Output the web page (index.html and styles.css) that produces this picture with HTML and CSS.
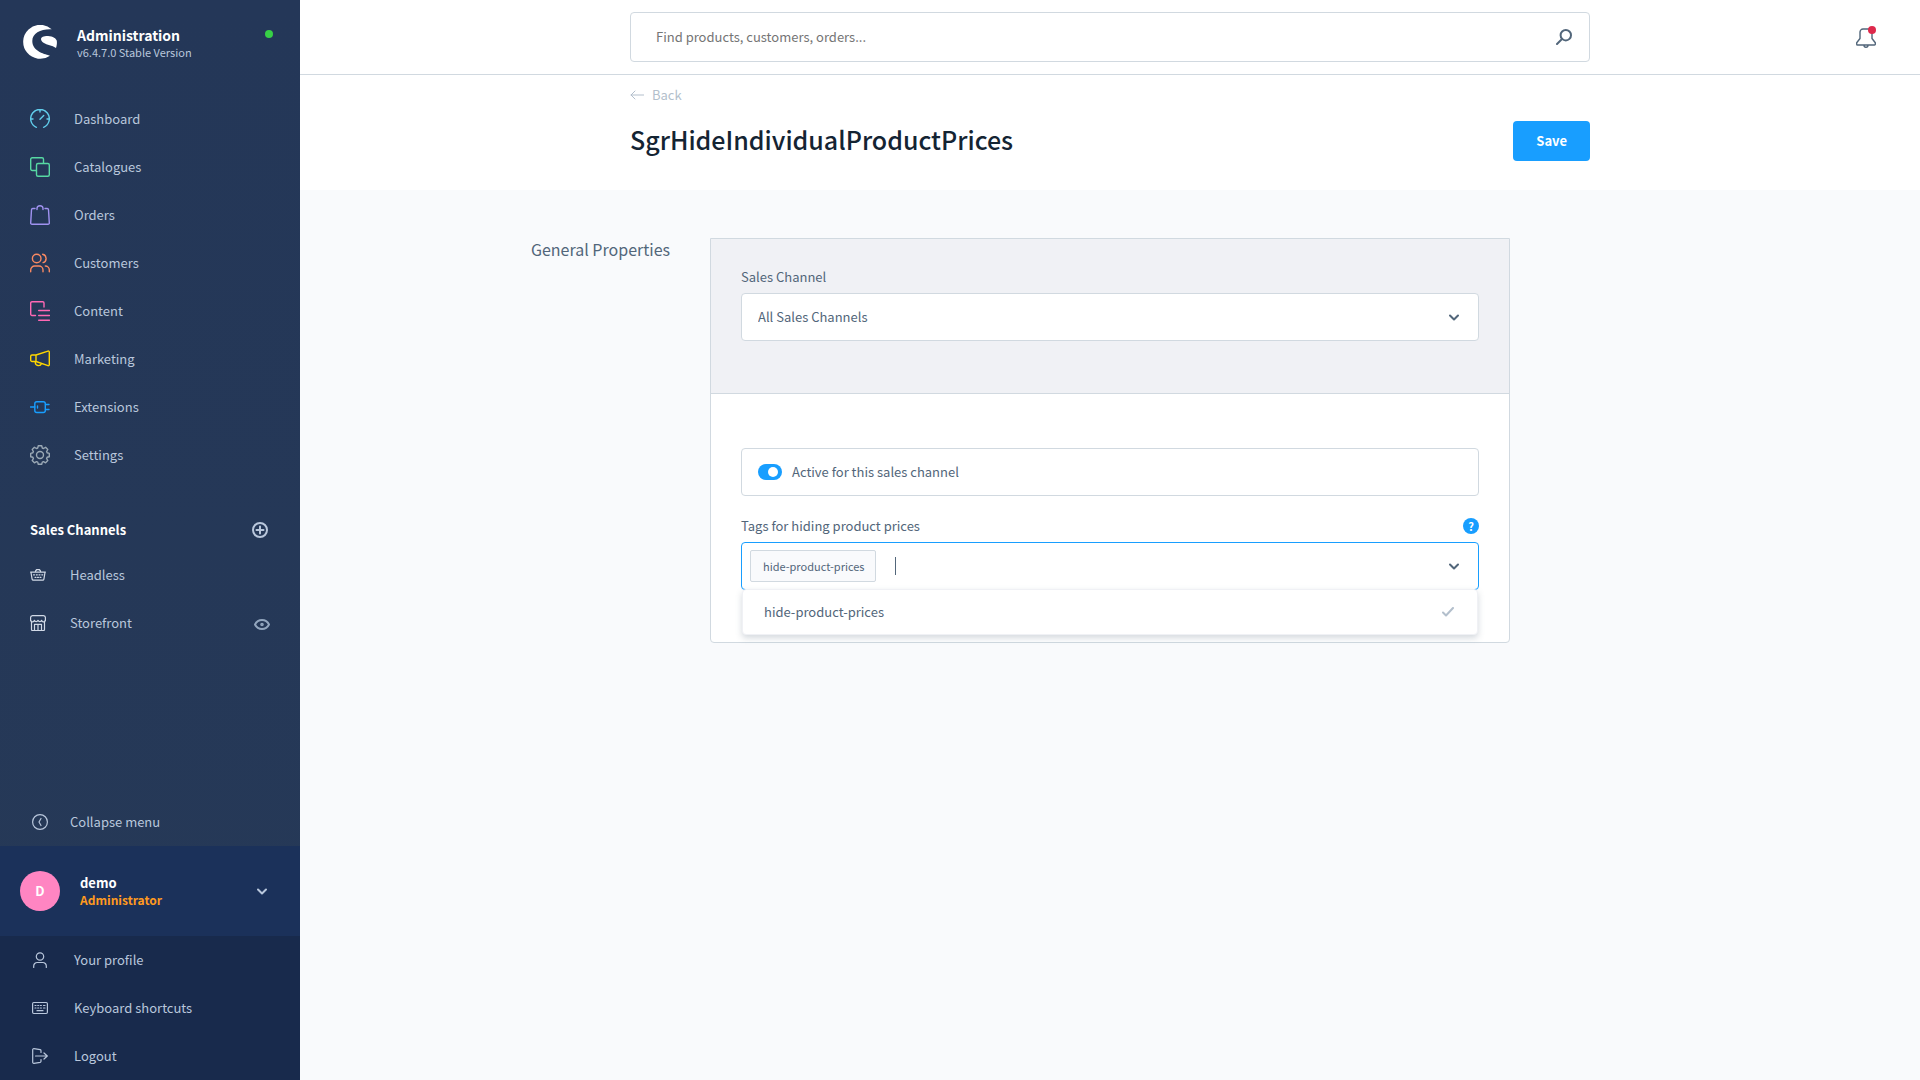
FILE: index.html
```html
<!DOCTYPE html>
<html lang="en">
<head>
<meta charset="utf-8">
<meta name="viewport" content="width=device-width, initial-scale=1">
<title>SgrHideIndividualProductPrices | Administration</title>
<link rel="stylesheet" href="styles.css">
</head>
<body>
<div class="app">
  <aside class="sidebar">
    <header class="brand">
      <svg class="brand-logo" viewBox="0 0 34 34" aria-hidden="true"><path d="M28.7 4.3A17 17 0 1 0 27 30.7C23 29.3 9.3 27 9.3 16 9.3 8 18 3.8 28.7 4.3z"/><path d="M18 14C18 12 21 10.8 25 10.9 30 11 33.3 13.5 33.8 15.8 34.1 18 33.8 21 33 22.9 29 20.5 24 20 20.5 17.8 19 16.8 18 15.5 18 14z"/></svg>
      <div class="brand-text">
        <strong class="brand-name">Administration</strong>
        <span class="brand-version">v6.4.7.0 Stable Version</span>
      </div>
      <span class="status-dot"></span>
    </header>

    <nav class="nav">
      <a class="nav-item" href="#dashboard"><svg class="icon cyan" viewBox="0 0 20 20"><path d="M6.400 18.300A9.300 9.300 0 1 1 13.600 18.300M10 1v2M1 10h2M17 10h2M10 10.300l3.700-3.800"/></svg>Dashboard</a>
      <a class="nav-item" href="#catalogues"><svg class="icon green" viewBox="0 0 20 20"><path d="M6 13.500H2.200a1.500 1.500 0 0 1-1.500-1.500V2.200A1.500 1.500 0 0 1 2.200.7H12a1.500 1.500 0 0 1 1.500 1.500V6"/><rect x="6.500" y="6.500" width="12.800" height="12.800" rx="1.500"/></svg>Catalogues</a>
      <a class="nav-item" href="#orders"><svg class="icon purple" viewBox="0 0 20 20"><path d="M5 3.500H2.800a1.300 1.300 0 0 0-1.300 1.200L.7 17.900a1.300 1.300 0 0 0 1.300 1.400h16a1.300 1.300 0 0 0 1.300-1.400L18.500 4.700a1.300 1.300 0 0 0-1.300-1.200H15M7 4.500V3.500a3 2.800 0 0 1 6 0v1"/></svg>Orders</a>
      <a class="nav-item" href="#customers"><svg class="icon orange" viewBox="0 0 20 20"><circle cx="6.700" cy="5.500" r="4.300"/><path d="M.7 18.800V17a4 4 0 0 1 4-4H9a4 4 0 0 1 4 4v1.800M12.700 1.300a4.300 4.300 0 0 1 .4 8.300M15.300 13a4 4 0 0 1 4 4v1.800"/></svg>Customers</a>
      <a class="nav-item" href="#content"><svg class="icon pink" viewBox="0 0 20 20"><path d="M5.500 14.500H2A1.300 1.300 0 0 1 .7 13.200V2A1.300 1.300 0 0 1 2 .7h10.700A1.300 1.300 0 0 1 14 2v4M8.700 9.500h10.800M8.700 14.500h10.800M8.700 19.300h10.800"/></svg>Content</a>
      <a class="nav-item" href="#marketing"><svg class="icon yellow" viewBox="0 0 20 20"><path d="M.7 7.300A1.300 1.300 0 0 1 2 6h4l12-3.900a1 1 0 0 1 1.300 1v12.600a1 1 0 0 1-1.300 1L6 12.500H2a1.300 1.300 0 0 1-1.300-1.300zM6 6v6.500M5.300 12.500v1a3.200 3.200 0 0 0 6.200 1"/></svg>Marketing</a>
      <a class="nav-item" href="#extensions"><svg class="icon blue" viewBox="0 0 20 20"><rect x="4.800" y="4.700" width="10.500" height="10.800" rx="2"/><path d="M.5 10H4.800M15.500 7.500H19M15.500 12.500H19M7.500 9v2"/></svg>Extensions</a>
      <a class="nav-item" href="#settings"><svg class="icon grey" viewBox="0 0 20 20"><path d="M8.300.7h3.400l.6 2.300 1.200.5 2.100-1.200 2.200 2.200-1.200 2.100.5 1.200 2.200.6v3.300l-2.200.6-.5 1.200 1.200 2.100-2.200 2.200-2.100-1.200-1.200.5-.6 2.200H8.300l-.6-2.200-1.200-.5-2.100 1.200-2.200-2.200 1.200-2.100-.5-1.200-2.200-.6V8.400l2.200-.6.5-1.200-1.200-2.100 2.200-2.200 2.100 1.200L7.700 3z"/><circle cx="10" cy="10" r="3.500"/></svg>Settings</a>
    </nav>

    <section class="channels">
      <div class="channels-head">
        <h2 class="channels-title">Sales Channels</h2>
        <button class="icon-button" type="button" aria-label="Add sales channel"><svg class="icon-small bold-line" viewBox="0 0 16 16"><circle cx="8" cy="8" r="7"/><path d="M8 4.500v7M4.500 8h7"/></svg></button>
      </div>
      <div class="channel">
        <a class="channel-link" href="#headless"><svg class="icon-small light" viewBox="0 0 16 16"><path d="M.6 5.100h14.800M1 5.500l1.100 6.700a1.200 1.200 0 0 0 1.200 1h9.400a1.200 1.200 0 0 0 1.200-1L15 5.500M5.500 5V4a1 1 0 0 1 1-.8M10.500 5V4a1 1 0 0 0-1-.8M6.500 2.700h3"/><path d="M3.500 7.800h1M6.300 7.800h1M9 7.800h1M11.800 7.800h1M5 10.300h1M7.500 10.300h1M10 10.300h1"/></svg>Headless</a>
      </div>
      <div class="channel">
        <a class="channel-link" href="#storefront"><svg class="icon-small light" viewBox="0 0 16 16"><path d="M1.500 6v8.500a1 1 0 0 0 1 1h11a1 1 0 0 0 1-1V6M2.500.6h11a2 2 0 0 1 1.900 2V4.500a1.600 1.600 0 0 1-3.700.8 2 2 0 0 1-3.700 0 2 2 0 0 1-3.700 0A1.600 1.600 0 0 1 .6 4.500V2.600a2 2 0 0 1 1.900-2zM4.500 15.500V9.300h7v6.200M8 9.300v6.200"/></svg>Storefront</a>
        <button class="icon-button" type="button" aria-label="Open storefront"><svg class="icon-small muted" viewBox="0 0 16 16"><path d="M1 9.500C4 3.600 12 3.600 15 9.500 12 15.400 4 15.400 1 9.500z"/><circle cx="8" cy="9.500" r=".8"/></svg></button>
      </div>
    </section>

    <footer class="sidebar-foot">
      <button class="foot-item collapse" type="button"><svg class="icon-small" viewBox="0 0 16 16"><circle cx="8" cy="8" r="7.400"/><path d="M9 4.500L7 8l2 3.500"/></svg>Collapse menu</button>
      <button class="user" type="button">
        <span class="avatar">D</span>
        <span class="user-text"><strong class="user-name">demo</strong><strong class="user-role">Administrator</strong></span>
        <svg class="chevron" viewBox="0 0 10 8"><path d="M1 2.500l4 4 4-4"/></svg>
      </button>
      <div class="user-menu">
        <a class="foot-item" href="#profile"><svg class="icon-small" viewBox="0 0 16 16"><circle cx="8" cy="4.500" r="3.700"/><path d="M1.700 15.500V14a3.500 3.500 0 0 1 3.500-3.500h5.600a3.500 3.500 0 0 1 3.500 3.500v1.500"/></svg>Your profile</a>
        <a class="foot-item" href="#shortcuts"><svg class="icon-small" viewBox="0 0 16 16"><rect x=".6" y="2.500" width="14.800" height="11" rx="1.200"/><path d="M3 5.500h1M5.700 5.500h1M8.400 5.500h1M11.500 5.500h1.500M3 8h1M5.700 8h1M8.400 8h1M11.500 8h1.500M5 10.700h6"/></svg>Keyboard shortcuts</a>
        <a class="foot-item" href="#logout"><svg class="icon-small" viewBox="0 0 16 16"><path d="M9 4.500V2.700a1 1 0 0 0-.8-1L2 .7A1 1 0 0 0 .7 1.700v12.600A1 1 0 0 0 2 15.300l6.200-1a1 1 0 0 0 .8-1v-1.800M3.500 8h11.700M12 5l3.300 3L12 11"/></svg>Logout</a>
      </div>
    </footer>
  </aside>

  <main class="main">
    <div class="topbar">
      <form class="search">
        <input class="search-input" type="search" aria-label="Search" placeholder="Find products, customers, orders...">
        <button class="icon-button" type="submit" aria-label="Search"><svg class="icon-small slate" viewBox="0 0 16 16"><circle cx="9.800" cy="6.200" r="5.200"/><path d="M6 10L1 15"/></svg></button>
      </form>
      <button class="bell" type="button" aria-label="Notifications">
        <svg class="icon bell-icon" viewBox="0 0 20 20"><path d="M7 1h6a3 3 0 0 1 3 3v6.500l3.300 4.300v1.400a.8.8 0 0 1-.8.8h-17a.8.8 0 0 1-.8-.8v-1.400L4 10.500V4a3 3 0 0 1 3-3zM8 17.200a2 2 0 0 0 4 0"/></svg>
        <span class="bell-dot"></span>
      </button>
    </div>

    <header class="page-head">
      <div class="page-head-inner">
        <a class="back" href="#extensions"><svg class="back-arrow" viewBox="0 0 14 10"><path d="M14 5H1M5 1L1 5l4 4"/></svg>Back</a>
        <div class="page-title-row">
          <h1 class="page-title">SgrHideIndividualProductPrices</h1>
          <button class="save" type="button">Save</button>
        </div>
      </div>
    </header>

    <div class="content">
      <h2 class="section-title">General Properties</h2>
      <form class="card">
        <div class="card-channel">
          <label class="label" for="channel">Sales Channel</label>
          <div class="select-wrap">
            <select class="select" id="channel"><option>All Sales Channels</option></select>
            <svg class="chevron slate" viewBox="0 0 10 8"><path d="M1 2.500l4 4 4-4"/></svg>
          </div>
        </div>
        <div class="card-settings">
          <label class="switch-field"><input class="switch" type="checkbox" checked>Active for this sales channel</label>
          <div class="label-row">
            <label class="label" for="tags">Tags for hiding product prices</label>
            <button class="help" type="button" aria-label="Help">?</button>
          </div>
          <div class="tags">
            <span class="tag">hide-product-prices</span>
            <span class="caret"></span>
            <input class="tags-input" id="tags" type="text">
            <svg class="chevron slate" viewBox="0 0 10 8"><path d="M1 2.500l4 4 4-4"/></svg>
            <ul class="results">
              <li class="result">hide-product-prices<svg class="check" viewBox="0 0 12 10"><path d="M1 5.500l3 3L11 1"/></svg></li>
            </ul>
          </div>
        </div>
      </form>
    </div>
  </main>
</div>
</body>
</html>
```
FILE: styles.css
```css
* {
  box-sizing: border-box;
}

body {
  margin: 0;
  background: #f9fafc;
  color: #52667a;
  font: 13px/20px "Noto Sans CJK SC", "Noto Sans CJK JP", sans-serif;
}

h1, h2, ul {
  margin: 0;
  padding: 0;
}

button, input, select {
  margin: 0;
  padding: 0;
  border: 0;
  background: none;
  color: inherit;
  font: inherit;
}

a {
  color: inherit;
  text-decoration: none;
}

svg {
  flex: none;
  fill: none;
  stroke: currentColor;
  stroke-linecap: round;
  stroke-linejoin: round;
}

.app {
  display: flex;
  min-height: 100vh;
}

/* Sidebar */

.sidebar {
  display: flex;
  flex: none;
  flex-direction: column;
  width: 300px;
  background: linear-gradient(#243758, #263957);
  color: #b9c7dc;
}

.brand {
  display: flex;
  gap: 20px;
  padding: 25px 27px 0 23px;
}

.brand-logo {
  width: 34px;
  height: 34px;
  fill: #fff;
  stroke: none;
}

.brand-text {
  flex: 1;
}

.brand-name, .brand-version {
  display: block;
}

.brand-name {
  color: #fff;
  font-size: 14px;
}

.brand-version {
  font-size: 11px;
  line-height: 14px;
}

.status-dot {
  width: 8px;
  height: 8px;
  margin-top: 5px;
  border-radius: 50%;
  background: #37d046;
}

.nav {
  padding-top: 36px;
}

.nav-item {
  display: flex;
  align-items: center;
  gap: 24px;
  height: 48px;
  padding: 0 30px;
}

.icon {
  width: 20px;
  height: 20px;
  stroke-width: 1.4;
}

.icon-small {
  width: 16px;
  height: 16px;
  stroke-width: 1.2;
}

.cyan { color: #61cdeb; }
.green { color: #57d9a3; }
.purple { color: #a092f0; }
.orange { color: #f88962; }
.pink { color: #ff68b4; }
.yellow { color: #ffd700; }
.blue { color: #189eff; }
.grey { color: #9aa8b5; }
.light { color: #d1d9e6; }
.muted { color: #93a6be; stroke-width: 2; }
.slate { color: #52667a; stroke-width: 2; }
.bold-line { stroke-width: 2; }

.icon-button {
  display: flex;
}

.channels {
  padding-top: 30px;
}

.channels-head {
  display: flex;
  align-items: center;
  justify-content: space-between;
  height: 42px;
  padding: 0 32px 0 30px;
}

.channels-title {
  color: #fff;
  font-size: 13px;
}

.channel {
  display: flex;
  align-items: center;
  justify-content: space-between;
  height: 48px;
  padding: 0 30px;
}

.channel-link {
  display: flex;
  align-items: center;
  gap: 24px;
}

.sidebar-foot {
  margin-top: auto;
}

.foot-item {
  display: flex;
  align-items: center;
  gap: 26px;
  width: 100%;
  height: 48px;
  padding: 0 32px;
}

.collapse {
  gap: 22px;
}

.user {
  display: flex;
  align-items: center;
  gap: 20px;
  width: 100%;
  height: 90px;
  padding: 0 33px 0 20px;
  background: #1b315a;
  text-align: left;
}

.avatar {
  width: 40px;
  border-radius: 50%;
  background: #ff85c2;
  color: #fff;
  font-weight: 700;
  line-height: 40px;
  text-align: center;
}

.user-text {
  flex: 1;
}

.user-name, .user-role {
  display: block;
  line-height: 17px;
}

.user-name {
  color: #fff;
}

.user-role {
  color: #ff9a1f;
  font-size: 12px;
}

.chevron {
  width: 10px;
  height: 8px;
  stroke-width: 2;
}

.user-menu {
  background: #182a4c;
}

/* Top bar */

.main {
  flex: 1;
  min-width: 0;
}

.topbar {
  display: grid;
  grid-template-columns: 1fr minmax(0, 960px) 1fr;
  align-items: center;
  height: 75px;
  border-bottom: 1px solid #d1d9e0;
  background: #fff;
}

.search {
  display: flex;
  grid-column: 2;
  align-items: center;
  height: 50px;
  padding: 0 17px 0 25px;
  border: 1px solid #d1d9e0;
  border-radius: 4px;
}

.search-input {
  flex: 1;
  min-width: 0;
  outline: 0;
}

.search-input::placeholder {
  color: #757575;
}

.bell {
  position: relative;
  display: flex;
  justify-self: end;
  margin-top: 2px;
  margin-right: 44px;
}

.bell-icon {
  color: #52667a;
}

.bell-dot {
  position: absolute;
  top: -2px;
  right: 0;
  width: 8px;
  height: 8px;
  border-radius: 50%;
  background: #de294c;
}

/* Page header */

.page-head {
  padding: 10px 0 29px;
  background: #fff;
}

.page-head-inner {
  max-width: 960px;
  margin: 0 auto;
}

.back {
  display: inline-flex;
  align-items: center;
  gap: 8px;
  color: #b3bfcc;
}

.back-arrow {
  width: 14px;
  height: 10px;
}

.page-title-row {
  display: flex;
  align-items: flex-start;
  justify-content: space-between;
  margin-top: 16px;
}

.page-title {
  color: #142433;
  font-size: 25px;
  font-weight: 500;
  line-height: 36px;
}

.save {
  height: 40px;
  padding: 0 23px;
  border-radius: 4px;
  background: #189eff;
  color: #fff;
  font-weight: 700;
}

/* Settings card */

.content {
  display: grid;
  grid-template-columns: 1fr minmax(0, 800px) 1fr;
  align-items: start;
  padding: 48px 0;
}

.section-title {
  padding-right: 40px;
  font-size: 16px;
  font-weight: 400;
  line-height: 22px;
  text-align: right;
}

.card {
  border: 1px solid #d1d9e0;
  border-radius: 0 0 4px 4px;
  background: #fff;
}

.card-channel {
  padding: 28px 30px 52px;
  border-bottom: 1px solid #d1d9e0;
  background: #f0f1f5;
}

.label {
  display: block;
}

.select-wrap {
  display: grid;
  align-items: center;
  margin-top: 6px;
}

.select-wrap > * {
  grid-area: 1 / 1;
}

.select-wrap .chevron {
  justify-self: end;
  margin-right: 20px;
  pointer-events: none;
}

.select {
  height: 48px;
  padding: 0 16px;
  border: 1px solid #d1d9e0;
  border-radius: 4px;
  background: #fff;
  appearance: none;
}

.card-settings {
  padding: 54px 30px 52px;
}

.switch-field {
  display: flex;
  align-items: center;
  gap: 10px;
  height: 48px;
  padding: 0 16px;
  border: 1px solid #d1d9e0;
  border-radius: 4px;
}

.switch {
  display: flex;
  align-items: center;
  justify-content: flex-end;
  width: 24px;
  height: 16px;
  padding: 0 4px;
  border-radius: 8px;
  background: #189eff;
  appearance: none;
}

.switch::before {
  width: 10px;
  height: 10px;
  border-radius: 50%;
  background: #fff;
  content: "";
}

.label-row {
  display: flex;
  align-items: center;
  justify-content: space-between;
  margin: 20px 0 6px;
}

.help {
  width: 16px;
  height: 16px;
  border-radius: 50%;
  background: #189eff;
  color: #fff;
  font-size: 11px;
  font-weight: 700;
  line-height: 16px;
}

.tags {
  position: relative;
  display: flex;
  align-items: center;
  height: 48px;
  padding: 0 19px 0 8px;
  border: 1px solid #189eff;
  border-radius: 4px;
}

.tag {
  height: 32px;
  padding: 0 10px 0 12px;
  border: 1px solid #d1d9e0;
  border-radius: 2px;
  background: #f9fafc;
  font-size: 11px;
  line-height: 30px;
}

.caret {
  width: 1px;
  height: 18px;
  margin-left: 19px;
  background: #52667a;
}

.tags-input {
  flex: 1;
  min-width: 0;
  outline: 0;
}

.results {
  position: absolute;
  top: 46px;
  right: 0;
  left: 0;
  border: 1px solid #f0f1f5;
  border-radius: 4px;
  background: #fff;
  box-shadow: 0 3px 6px rgba(82, 102, 122, 0.25);
  list-style: none;
}

.result {
  display: flex;
  align-items: center;
  justify-content: space-between;
  height: 44px;
  padding: 0 23px 0 21px;
}

.check {
  width: 12px;
  height: 10px;
  color: #b3bfcc;
  stroke-width: 2;
}
```
